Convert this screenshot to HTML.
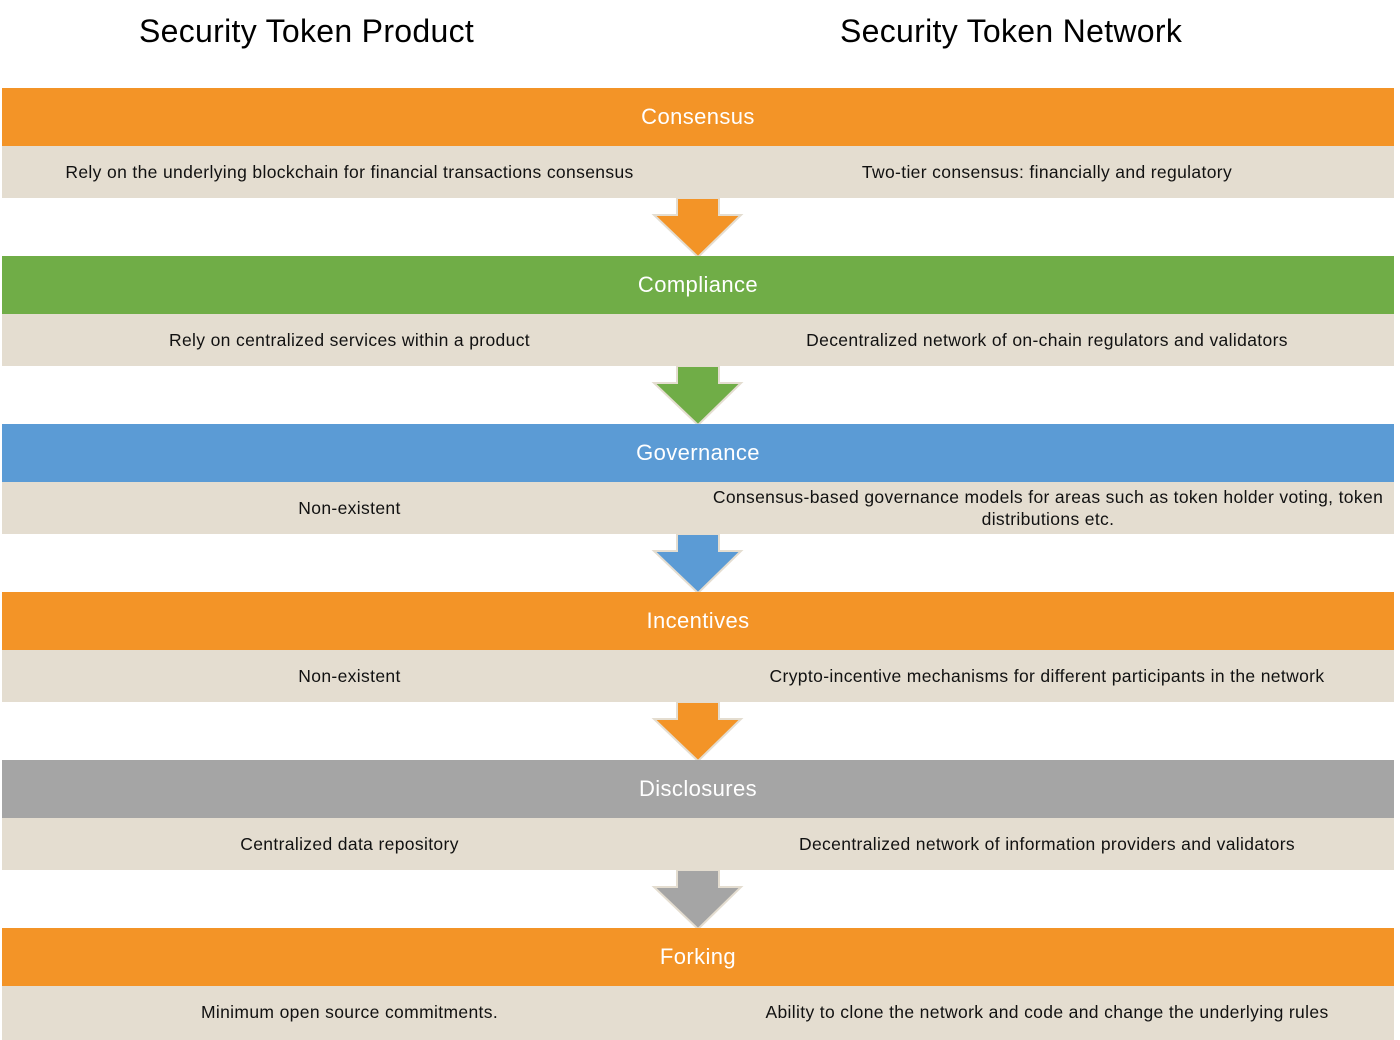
<!DOCTYPE html>
<html><head><style>
body{margin:0;width:1400px;height:1040px;background:#fff;position:relative;overflow:hidden;font-family:"Liberation Sans",sans-serif}
.h{position:absolute;top:13px;font-size:32px;color:#000;letter-spacing:0.3px}
.bar{position:absolute;left:2px;width:1392px;height:58px;color:#fff;font-size:22px;text-align:center;line-height:58px;letter-spacing:0.4px}
.row{position:absolute;left:2px;width:1392px;height:52px;background:#E4DDD0;font-size:17.5px;color:#111;letter-spacing:0.35px}
.c{position:absolute;top:0;height:52px;display:flex;align-items:center;justify-content:center;text-align:center;line-height:22px;white-space:nowrap}
.l{left:0;width:695px}.r{left:700px;width:690px}
svg{position:absolute;left:650px}
</style></head><body>
<div class="h" style="left:139px">Security Token Product</div>
<div class="h" style="left:840px">Security Token Network</div>

<div class="bar" style="top:88px;background:#F39427">Consensus</div>
<div class="row" style="top:146px"><div class="c l">Rely on the underlying blockchain for financial transactions consensus</div><div class="c r">Two-tier consensus: financially and regulatory</div></div>
<svg style="top:198px" width="96" height="60"><polygon points="27,0 69,0 69,17 91,17 48,59 4,17 27,17" fill="#F39427" stroke="#E4DDD0" stroke-width="2"/></svg>

<div class="bar" style="top:256px;background:#70AD47">Compliance</div>
<div class="row" style="top:314px"><div class="c l">Rely on centralized services within a product</div><div class="c r">Decentralized network of on-chain regulators and validators</div></div>
<svg style="top:366px" width="96" height="60"><polygon points="27,0 69,0 69,17 91,17 48,59 4,17 27,17" fill="#70AD47" stroke="#E4DDD0" stroke-width="2"/></svg>

<div class="bar" style="top:424px;background:#5B9BD5">Governance</div>
<div class="row" style="top:482px"><div class="c l">Non-existent</div><div class="c r" style="left:700px;width:692px">Consensus-based governance models for areas such as token holder voting, token<br>distributions etc.</div></div>
<svg style="top:534px" width="96" height="60"><polygon points="27,0 69,0 69,17 91,17 48,59 4,17 27,17" fill="#5B9BD5" stroke="#E4DDD0" stroke-width="2"/></svg>

<div class="bar" style="top:592px;background:#F39427">Incentives</div>
<div class="row" style="top:650px"><div class="c l">Non-existent</div><div class="c r">Crypto-incentive mechanisms for different participants in the network</div></div>
<svg style="top:702px" width="96" height="60"><polygon points="27,0 69,0 69,17 91,17 48,59 4,17 27,17" fill="#F39427" stroke="#E4DDD0" stroke-width="2"/></svg>

<div class="bar" style="top:760px;background:#A5A5A5">Disclosures</div>
<div class="row" style="top:818px"><div class="c l">Centralized data repository</div><div class="c r">Decentralized network of information providers and validators</div></div>
<svg style="top:870px" width="96" height="60"><polygon points="27,0 69,0 69,17 91,17 48,59 4,17 27,17" fill="#A5A5A5" stroke="#E4DDD0" stroke-width="2"/></svg>

<div class="bar" style="top:928px;background:#F39427">Forking</div>
<div class="row" style="top:986px;height:54px"><div class="c l">Minimum open source commitments.</div><div class="c r">Ability to clone the network and code and change the underlying rules</div></div>
</body></html>
